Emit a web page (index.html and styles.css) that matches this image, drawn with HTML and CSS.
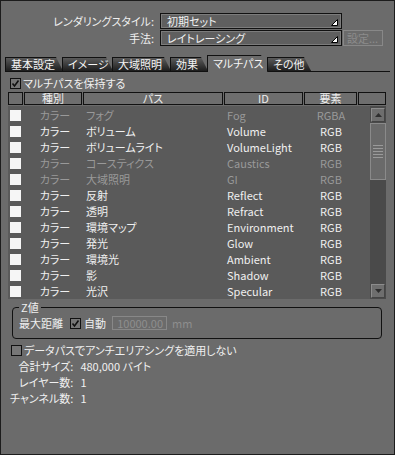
FILE: index.html
```html
<!DOCTYPE html>
<html lang="ja">
<head>
  <meta charset="UTF-8" />
  <title>マルチパス</title>
  <link rel="stylesheet" href="styles.css">
</head>
<body>

  <div class="window">

    <div class="field-row">
      <span class="field-label">レンダリングスタイル:</span>
      <div class="select">
        <span>初期セット</span>
        <svg class="select-arrow" width="7" height="7" viewBox="0 0 7 7"><polygon points="0.5,6.5 6.5,0.5 6.5,6.5" fill="#fff" stroke="#000" stroke-width="1"/></svg>
      </div>
    </div>
    <div class="field-row">
      <span class="field-label">手法:</span>
      <div class="select">
        <span>レイトレーシング</span>
        <svg class="select-arrow" width="7" height="7" viewBox="0 0 7 7"><polygon points="0.5,6.5 6.5,0.5 6.5,6.5" fill="#fff" stroke="#000" stroke-width="1"/></svg>
      </div>
      <button class="btn" disabled>設定...</button>
    </div>

    <div class="tabs">
      <span class="tab tab-basic">基本設定</span>
      <span class="tab tab-image">イメージ</span>
      <span class="tab tab-gi">大域照明</span>
      <span class="tab tab-fx">効果</span>
      <span class="tab tab-multi active">マルチパス</span>
      <span class="tab tab-other">その他</span>
    </div>

    <div class="check-row keep-row">
      <span class="check on"><svg width="9" height="9" viewBox="0 0 9 9"><polyline points="1.5,4.5 3.5,7 7.5,1.5" fill="none" stroke="#111" stroke-width="1.6"/></svg></span>
      <span>マルチパスを保持する</span>
    </div>

    <div class="pass-table">
      <div class="thead">
        <div class="th"></div>
        <div class="th">種別</div>
        <div class="th">パス</div>
        <div class="th">ID</div>
        <div class="th">要素</div>
        <div class="th"></div>
      </div>

      <div class="tbody">
        <div class="rows">
          <div class="row dim"><span class="box"></span><span class="c-kind">カラー</span><span class="c-pass">フォグ</span><span class="c-id">Fog</span><span class="c-el">RGBA</span></div>
          <div class="row"><span class="box"></span><span class="c-kind">カラー</span><span class="c-pass">ボリューム</span><span class="c-id">Volume</span><span class="c-el">RGB</span></div>
          <div class="row"><span class="box"></span><span class="c-kind">カラー</span><span class="c-pass">ボリュームライト</span><span class="c-id">VolumeLight</span><span class="c-el">RGB</span></div>
          <div class="row dim"><span class="box"></span><span class="c-kind">カラー</span><span class="c-pass">コースティクス</span><span class="c-id">Caustics</span><span class="c-el">RGB</span></div>
          <div class="row dim"><span class="box"></span><span class="c-kind">カラー</span><span class="c-pass">大域照明</span><span class="c-id">GI</span><span class="c-el">RGB</span></div>
          <div class="row"><span class="box"></span><span class="c-kind">カラー</span><span class="c-pass">反射</span><span class="c-id">Reflect</span><span class="c-el">RGB</span></div>
          <div class="row"><span class="box"></span><span class="c-kind">カラー</span><span class="c-pass">透明</span><span class="c-id">Refract</span><span class="c-el">RGB</span></div>
          <div class="row"><span class="box"></span><span class="c-kind">カラー</span><span class="c-pass">環境マップ</span><span class="c-id">Environment</span><span class="c-el">RGB</span></div>
          <div class="row"><span class="box"></span><span class="c-kind">カラー</span><span class="c-pass">発光</span><span class="c-id">Glow</span><span class="c-el">RGB</span></div>
          <div class="row"><span class="box"></span><span class="c-kind">カラー</span><span class="c-pass">環境光</span><span class="c-id">Ambient</span><span class="c-el">RGB</span></div>
          <div class="row"><span class="box"></span><span class="c-kind">カラー</span><span class="c-pass">影</span><span class="c-id">Shadow</span><span class="c-el">RGB</span></div>
          <div class="row"><span class="box"></span><span class="c-kind">カラー</span><span class="c-pass">光沢</span><span class="c-id">Specular</span><span class="c-el">RGB</span></div>
        </div>

        <div class="scrollbar">
          <div class="sb-btn"><svg width="7" height="4" viewBox="0 0 7 4"><polygon points="0,4 3.5,0 7,4" fill="#2e2e2e"/></svg></div>
          <div class="sb-thumb">
            <span class="grip"></span><span class="grip"></span><span class="grip"></span><span class="grip"></span><span class="grip"></span>
          </div>
          <div class="sb-track"></div>
          <div class="sb-btn"><svg width="7" height="4" viewBox="0 0 7 4"><polygon points="0,0 7,0 3.5,4" fill="#2e2e2e"/></svg></div>
        </div>
      </div>
    </div>

    <fieldset class="zgroup">
      <legend>Z値</legend>
      <div class="z-row">
        <span class="z-label">最大距離</span>
        <span class="check on"><svg width="9" height="9" viewBox="0 0 9 9"><polyline points="1.5,4.5 3.5,7 7.5,1.5" fill="none" stroke="#111" stroke-width="1.6"/></svg></span>
        <span class="z-auto">自動</span>
        <span class="num-input">10000.00</span>
        <span class="unit">mm</span>
      </div>
    </fieldset>

    <div class="check-row aa-row">
      <span class="check"></span>
      <span>データパスでアンチエリアシングを適用しない</span>
    </div>

    <div class="info">
      <span class="info-label">合計サイズ:</span><span>480,000 バイト</span>
      <span class="info-label">レイヤー数:</span><span>1</span>
      <span class="info-label">チャンネル数:</span><span>1</span>
    </div>

  </div>

</body>
</html>
```

FILE: styles.css
```css
body {
  margin: 0;
  padding: 0;
  background: #6b6b6b;
  font-family: "Noto Sans CJK JP", sans-serif;
  font-size: 11px;
  font-feature-settings: "palt";
  color: #f0f0f0;
}

.window {
  box-sizing: border-box;
  width: 395px;
  height: 455px;
  border: 1px solid #1c1c1c;
  background: #6b6b6b;
  padding-top: 12px;
  overflow: hidden;
}

/* top fields */
.field-row {
  display: flex;
  align-items: center;
  height: 16px;
  margin-bottom: 1px;
}

.field-label {
  width: 153px;
  margin-right: 6px;
  text-align: right;
  line-height: 16px;
}

.select {
  box-sizing: border-box;
  width: 182px;
  height: 16px;
  display: flex;
  align-items: center;
  border: 1px solid #111;
  box-shadow: inset 0 0 0 1px #7c7c7c;
  background: #5f5f5f;
  padding-left: 6px;
  line-height: 14px;
}

.select-arrow {
  margin-left: auto;
  margin-right: 3px;
  margin-top: 3px;
}

.btn {
  box-sizing: border-box;
  width: 40px;
  height: 16px;
  margin-left: 1px;
  padding: 0 0 0 3px;
  border: 1px solid #888;
  background: #6b6b6b;
  color: #8c8c8c;
  font-family: inherit;
  font-size: 11px;
  font-feature-settings: "palt";
  text-align: left;
  line-height: 14px;
}

/* tabs */
.tabs {
  display: flex;
  align-items: flex-end;
  height: 16px;
  margin: 9px 4px 0 4px;
  border-bottom: 1px solid #111;
}

.tab {
  box-sizing: border-box;
  height: 14px;
  padding-left: 5px;
  margin-right: -1px;
  background: linear-gradient(#5a5a5a, #1d1d1d);
  border: 1px solid #111;
  border-bottom: none;
  clip-path: polygon(0 0, calc(100% - 7px) 0, 100% 100%, 0 100%);
  line-height: 13px;
  color: #f4f4f4;
}

.tab-basic { width: 58px; }
.tab-image { width: 51px; }
.tab-gi { width: 59px; }
.tab-fx { width: 38px; }
.tab-multi { width: 61px; }
.tab-other { width: 44px; }

.tab.active {
  height: 17px;
  margin-bottom: -1px;
  background: #6b6b6b;
  line-height: 14px;
}

/* check rows */
.check-row {
  display: flex;
  align-items: center;
  gap: 2px;
  height: 13px;
  line-height: 13px;
}

.keep-row {
  margin: 5px 0 0 9px;
}

.check {
  box-sizing: border-box;
  width: 11px;
  height: 11px;
  border: 1px solid #111;
  background: #767676;
  display: flex;
  align-items: center;
  justify-content: center;
}

/* pass table */
.pass-table {
  margin: 2px 8px 0 7px;
}

.thead {
  display: grid;
  grid-template-columns: 15px 58px 140px 79px 53px 28px;
  gap: 1px;
  height: 13px;
}

.th {
  box-sizing: border-box;
  border: 1px solid #111;
  background: #6e6e6e;
  text-align: center;
  line-height: 11px;
  color: #eee;
}

.tbody {
  display: flex;
  height: 193px;
  margin-top: 1px;
  background: #5a5a5a;
}

.rows {
  flex: 1;
  padding-top: 1px;
}

.row {
  display: grid;
  grid-template-columns: 16px 59px 141px 80px 54px;
  align-items: center;
  height: 16px;
  line-height: 16px;
}

.row.dim {
  color: #999;
}

.box {
  width: 11px;
  height: 11px;
  margin-left: 2px;
  background: #f6f6f6;
}

.c-kind {
  text-align: center;
  padding-left: 3px;
}

.c-pass,
.c-id {
  padding-left: 3px;
}

.c-el {
  text-align: center;
}

/* scrollbar */
.scrollbar {
  width: 16px;
  display: flex;
  flex-direction: column;
  background: #4a4a4a;
  padding: 2px 0 1px 0;
  box-sizing: border-box;
}

.sb-btn {
  box-sizing: border-box;
  height: 14px;
  margin: 0 1px;
  background: #6e6e6e;
  border: 1px solid #8c8c8c;
  border-right-color: #444;
  border-bottom-color: #444;
  display: flex;
  align-items: center;
  justify-content: center;
}

.sb-thumb {
  box-sizing: border-box;
  height: 57px;
  margin: 1px 0 0 0;
  background: #6a6a6a;
  border: 1px solid #8a8a8a;
  display: flex;
  flex-direction: column;
  justify-content: center;
  gap: 2px;
  padding: 0 2px;
}

.grip {
  height: 1px;
  background: #9a9a9a;
}

.sb-track {
  flex: 1;
}

/* z group */
.zgroup {
  margin: 2px 12px 0 11px;
  padding: 0 0 8px 6px;
  border: 1px solid #111;
  border-radius: 4px;
}

.zgroup legend {
  padding: 0 2px;
  line-height: 13px;
}

.z-row {
  display: flex;
  align-items: center;
  height: 14px;
  margin-top: 2px;
}

.z-label {
  width: 51px;
}

.z-auto {
  margin-left: 3px;
  width: 28px;
}

.num-input {
  box-sizing: border-box;
  width: 55px;
  height: 14px;
  border: 1px solid #888;
  padding-right: 3px;
  text-align: right;
  line-height: 12px;
  color: #8e8e8e;
}

.unit {
  margin-left: 5px;
  color: #8e8e8e;
}

.aa-row {
  margin: 5px 0 0 10px;
}

/* info */
.info {
  display: grid;
  grid-template-columns: max-content auto;
  column-gap: 7px;
  justify-content: start;
  margin: 1px 0 0 9px;
  line-height: 16px;
}

.info-label {
  text-align: right;
  white-space: nowrap;
}
```
